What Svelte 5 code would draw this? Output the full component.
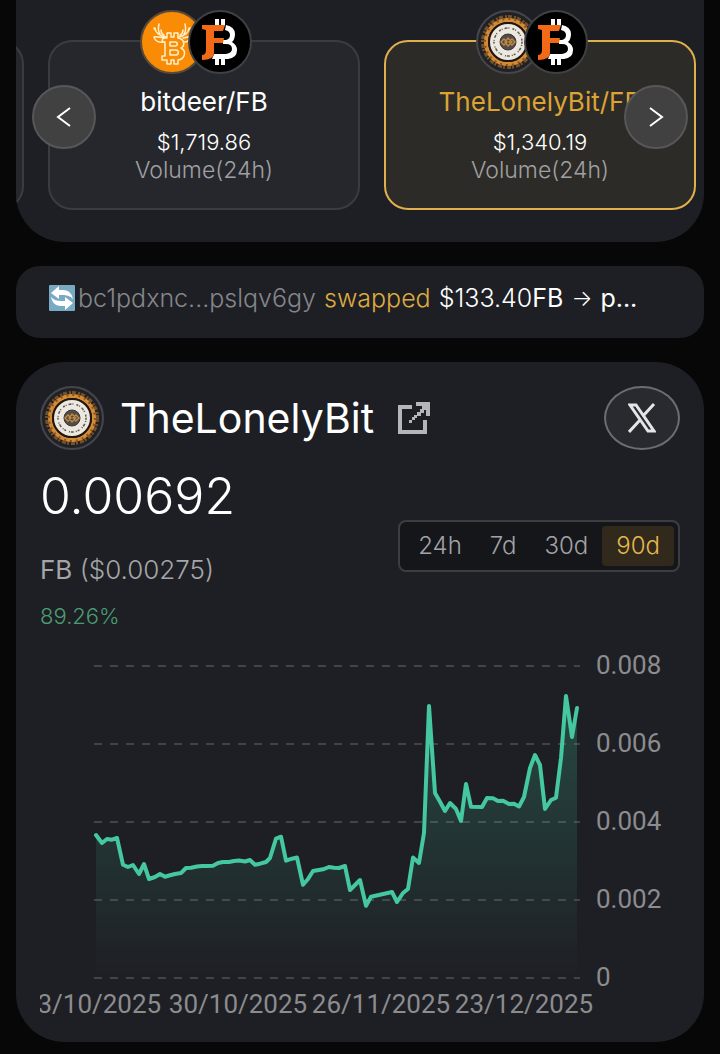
<script>
	let range = '90d';
	const ranges = ['24h', '7d', '30d', '90d'];

	const pairs = [
		{ name: 'bitdeer/FB', volume: '$1,719.86', icon: 'deer' },
		{ name: 'TheLonelyBit/FB', volume: '$1,340.19', icon: 'lonely' }
	];
	let selected = 'TheLonelyBit/FB';

	const yTicks = [
		{ label: '0.008', y: 26 },
		{ label: '0.006', y: 104 },
		{ label: '0.004', y: 182 },
		{ label: '0.002', y: 260 },
		{ label: '0', y: 338 }
	];

	const xTicks = [
		{ label: '03/10/2025', x: 52 },
		{ label: '30/10/2025', x: 198 },
		{ label: '26/11/2025', x: 341 },
		{ label: '23/12/2025', x: 484 }
	];

	const points = [
		[56, 195], [62, 203], [67, 199], [72, 199.7], [77, 198], [83, 224.7], [88, 227], [93, 225],
		[99, 234], [104, 224], [109, 239], [115, 237], [120, 234], [125, 236.7], [130, 235.3],
		[135, 234], [141, 233], [146, 228], [151, 227.7], [157, 226.5], [162, 226], [167, 226],
		[173, 225.7], [178, 223], [183, 222], [189, 222], [194, 221], [199, 220.5], [205, 221.5],
		[210, 220], [215, 224.7], [220, 223.7], [226, 222], [230, 218], [236, 198.7], [241, 196.7],
		[246, 220.7], [252, 218.7], [257, 217.5], [263, 244.7], [268, 239], [273, 231], [283, 229.3],
		[289, 227], [294, 227.7], [299, 228], [305, 226], [310, 250], [315, 245], [320, 240],
		[326, 265.7], [331, 256.7], [341, 254.5], [352, 252], [357, 262], [363, 253], [368, 249],
		[373, 217.5], [379, 223], [384, 193], [389, 66], [395, 153], [400, 161.7], [405, 171],
		[410, 163], [416, 169], [421, 181], [426, 144], [431, 166.7], [442, 167], [447, 158],
		[453, 158.3], [458, 161], [463, 160.7], [469, 164], [474, 163.7], [479, 166.5], [484, 157],
		[490, 128], [495, 115], [500, 125], [505, 169], [511, 160], [516, 157.7], [521, 118],
		[526, 56], [532, 97], [537, 68]
	];

	$: line = points.map((p) => p.join(',')).join(' ');
	$: area = `56,338 ${line} 537,338`;
</script>

<svelte:head>
	<title>TheLonelyBit/FB</title>
</svelte:head>

{#snippet lonelyCoin()}
	<svg class="coin" viewBox="0 0 64 64" aria-hidden="true">
		<circle cx="32" cy="32" r="31" fill="#202126" stroke="#44464b" stroke-width="2" />
		<circle cx="32" cy="32" r="25" fill="none" stroke="#765027" stroke-width="4" stroke-dasharray="4 2 2 1" />
		<circle cx="32" cy="32" r="22" fill="none" stroke="#d58a35" stroke-width="4" />
		<circle cx="32" cy="32" r="23" fill="none" stroke="#835620" stroke-width="2" stroke-dasharray="2 4" />
		<circle cx="32" cy="32" r="19" fill="#ece7df" stroke="#21170f" stroke-width="2" />
		<circle cx="32" cy="32" r="14" fill="none" stroke="#5d5851" stroke-width="1.5" stroke-dasharray="2 1 1 2 3 1 1 3" />
		<circle cx="32" cy="32" r="8" fill="#514c48" stroke="#393735" />
		<path d="M25 32l3-3 3 3-3 3zM29 32l3-4 4 4-4 4zM33 32l3-3 3 3-3 3z" fill="none" stroke="#c58a42" stroke-width="1.3" />
	</svg>
{/snippet}

{#snippet deerCoin()}
	<svg class="coin" viewBox="0 0 64 64" aria-hidden="true">
		<circle cx="32" cy="32" r="31" fill="#fa8c05" stroke="#5a4a39" stroke-width="2" />
		<g fill="none" stroke="#fff0c9" stroke-width="1.5" stroke-linejoin="round" stroke-linecap="round">
			<path d="M26 27c-7-1-11-5-11-9M16 21l-2-3M20 24c-2-3-2-6-1-10M24 25c-2-1-3-3-3-5" />
			<path d="M38 27c7-1 11-5 11-9M48 21l2-3M44 24c2-3 2-6 1-10M40 25c2-1 3-3 3-5" />
			<path d="M25 28c-4 0-8-2-11-1 1 4 5 6 10 5M43 28c3 0 5-2 8-1-1 4-4 5-7 5" />
			<path d="M23 28h4v-5h4v4h3v-4h4v5c7 1 7 8 3 10 6 3 4 11-3 12v4h-4v-4h-3v4h-4v-4h-5v-4h3V32h-3z" />
			<path d="M30 32h5c3 0 3 4 0 4h-5zM30 40h6c3 0 3 5 0 5h-6z" />
		</g>
	</svg>
{/snippet}

{#snippet fbCoin()}
	<svg class="coin" viewBox="0 0 64 64" aria-hidden="true">
		<circle cx="32" cy="32" r="31" fill="#000" stroke="#3f4044" stroke-width="2" />
		<path d="M27 9h4v7h-4zM33 9h4v7h-4zM27 48h4v7h-4zM33 48h4v7h-4z" fill="#fff" />
		<path d="M38 15q9 2 9 9 0 5-3 8 5 3 5 8 0 8-9 9H24l2-5h12q6-1 6-5 0-5-6-5h-3v-4h3q4-1 4-5 0-4-5-5z" fill="#fff" />
		<path d="M14 15h23l-2 6H26v7h10l-1 5h-9v10q0 7-12 7v-5q4 0 4-5V20l-4-1z" fill="#f26a16" />
	</svg>
{/snippet}

<main>
	<section class="panel pairs">
		<div class="track">
			<div class="pair"></div>
			{#each pairs as pair (pair.name)}
				<button class="pair" class:selected={selected === pair.name} on:click={() => (selected = pair.name)}>
					<span class="coins">
						{#if pair.icon === 'deer'}
							{@render deerCoin()}
						{:else}
							{@render lonelyCoin()}
						{/if}
						{@render fbCoin()}
					</span>
					<span class="pair-name">{pair.name}</span>
					<span class="pair-volume">{pair.volume}</span>
					<span class="pair-caption">Volume(24h)</span>
				</button>
			{/each}
		</div>
		<button class="nav prev" aria-label="Previous">
			<svg viewBox="0 0 24 24"><path d="M18 3L6 12l12 9" /></svg>
		</button>
		<button class="nav next" aria-label="Next">
			<svg viewBox="0 0 24 24"><path d="M6 3l12 9-12 9" /></svg>
		</button>
	</section>

	<section class="panel ticker">
		<svg class="swap" viewBox="0 0 28 28" aria-hidden="true">
			<rect x="1" y="1" width="26" height="26" rx="1" fill="#79aac4" />
			<path d="M3 9l8-7v4h4c6 0 9 4 10 9-3-3-6-4-10-4h-4v4z" fill="#fff" />
			<path d="M25 19l-8 7v-4h-4c-6 0-9-4-10-9 3 3 6 4 10 4h4v-4z" fill="#fff" />
		</svg>
		<span class="address">bc1pdxnc...pslqv6gy</span>
		<span class="action">swapped</span>
		<span>$133.40<b>FB</b></span>
		<span class="arrow">→</span>
		<b>p...</b>
	</section>

	<section class="panel token">
		<header>
			{@render lonelyCoin()}
			<h1>TheLonelyBit</h1>
			<a class="external" href="#explorer" aria-label="Open in explorer">
				<svg viewBox="0 0 32 32" fill="#b5b6b8">
					<path d="M0 3h14v4H4v21h21V18h4v14H0z" />
					<path d="M18 0h14v14h-4V8h-4V4h-6zM22 7h4v4h-4zM19 10h4v4h-4zM16 13h3v3h-3zM14 15h3v3h-3zM11 18h3v3h-3z" />
				</svg>
			</a>
			<a class="social" href="#x" aria-label="X">
				<svg viewBox="0 0 28 30" fill="none" stroke="#e5e5e7" stroke-width="3">
					<path d="M2 2h6l18 26h-6zM26 1L15 13M12 17L1 29" />
				</svg>
			</a>
		</header>

		<div class="summary">
			<div>
				<div class="price">0.00692</div>
				<div class="quote"><b>FB</b> ($0.00275)</div>
				<div class="change">89.26%</div>
			</div>
			<div class="ranges">
				{#each ranges as item (item)}
					<button class:active={range === item} on:click={() => (range = item)}>{item}</button>
				{/each}
			</div>
		</div>

		<svg class="chart" viewBox="0 0 640 378" role="img" aria-label="Price, last 90 days">
			<defs>
				<linearGradient id="fill" gradientUnits="userSpaceOnUse" x1="0" y1="56" x2="0" y2="338">
					<stop offset="0" stop-color="#41c9a0" stop-opacity="0.25" />
					<stop offset="1" stop-color="#41c9a0" stop-opacity="0" />
				</linearGradient>
			</defs>
			{#each yTicks as tick (tick.label)}
				<line x1="54" x2="540" y1={tick.y} y2={tick.y} />
				<text x="556" y={tick.y + 8}>{tick.label}</text>
			{/each}
			<polygon points={area} fill="url(#fill)" />
			<polyline points={line} />
			{#each xTicks as tick (tick.label)}
				<text x={tick.x} y="373" text-anchor="middle">{tick.label}</text>
			{/each}
		</svg>
	</section>
</main>

<style>
	:global(body) {
		background: #070707;
	}

	main {
		display: flex;
		flex-direction: column;
		gap: 24px;
		padding: 0 16px 12px;
		color: #fff;
		font-family: Inter, 'Noto Sans', sans-serif;
		font-size: 24px;
		font-weight: 300;
	}

	button {
		font: inherit;
		color: inherit;
		cursor: pointer;
	}

	b {
		font-weight: 400;
	}

	.panel {
		background: #1e1f24;
		border-radius: 48px;
	}

	.coin {
		display: block;
		width: 64px;
		height: 64px;
		flex: none;
	}

	.pairs {
		position: relative;
		overflow: hidden;
		padding: 40px 8px 32px;
		border-radius: 0 0 48px 48px;
	}

	.track {
		display: flex;
		justify-content: flex-end;
		gap: 24px;
	}

	.pair {
		position: relative;
		display: flex;
		flex: 0 0 312px;
		flex-direction: column;
		align-items: center;
		box-sizing: border-box;
		padding: 44px 0 24px;
		background: #26272d;
		border: 2px solid #3b3c41;
		border-radius: 24px;
	}

	.pair.selected {
		background: #2d2b27;
		border-color: #e0b04c;
	}

	.coins {
		position: absolute;
		top: -32px;
		display: flex;
	}

	.coins .coin {
		margin-left: -16px;
	}

	.pair-name {
		margin-bottom: 10px;
		font-size: 26px;
		font-weight: 400;
		line-height: 32px;
	}

	.selected .pair-name {
		color: #dda335;
	}

	.pair-volume,
	.pair-caption {
		font-size: 22px;
		line-height: 28px;
	}

	.pair-caption {
		color: #a0a0a2;
		font-size: 23px;
	}

	.nav {
		position: absolute;
		top: 85px;
		display: grid;
		place-items: center;
		width: 64px;
		height: 64px;
		padding: 0;
		background: #414142;
		border: 2px solid #57575a;
		border-radius: 50%;
	}

	.nav svg {
		width: 24px;
		height: 24px;
		fill: none;
		stroke: #fff;
		stroke-width: 2;
	}

	.prev {
		left: 16px;
	}

	.next {
		right: 16px;
	}

	.ticker {
		display: flex;
		align-items: center;
		gap: 8px;
		padding: 16px 32px 24px;
		border-radius: 24px;
		font-size: 25px;
		line-height: 32px;
		white-space: nowrap;
	}

	.swap {
		width: 28px;
		height: 28px;
		margin-right: -6px;
		flex: none;
	}

	.address {
		color: #85868a;
	}

	.action {
		color: #dfab3e;
	}

	.arrow {
		font-size: 22px;
	}

	.token {
		padding: 24px;
	}

	header {
		display: flex;
		align-items: center;
	}

	h1 {
		margin: 0 24px 0 16px;
		font-size: 41px;
		font-weight: 400;
		line-height: 48px;
	}

	.external svg {
		display: block;
		width: 32px;
		height: 32px;
	}

	.social {
		display: grid;
		place-items: center;
		box-sizing: border-box;
		width: 76px;
		height: 64px;
		margin-left: auto;
		background: #292a2f;
		border: 2px solid #6c6d71;
		border-radius: 50%;
	}

	.social svg {
		width: 28px;
		height: 30px;
	}

	.summary {
		display: flex;
		align-items: center;
		justify-content: space-between;
		margin: 14px 0 12px;
	}

	.price {
		margin-bottom: 26px;
		font-size: 50px;
		line-height: 64px;
	}

	.quote {
		margin-bottom: 18px;
		color: #a5a5a8;
		font-size: 26px;
		line-height: 32px;
	}

	.change {
		color: #4b9c72;
		font-size: 22px;
		line-height: 24px;
	}

	.ranges {
		display: flex;
		padding: 4px;
		background: #15161a;
		border: 2px solid #3c3d41;
		border-radius: 8px;
	}

	.ranges button {
		padding: 0 14px;
		background: none;
		border: 0;
		border-radius: 4px;
		color: #a3a3a6;
		line-height: 40px;
	}

	.ranges .active {
		background: #32291d;
		color: #e5b94e;
	}

	.chart {
		display: block;
		width: 100%;
		overflow: hidden;
	}

	.chart line {
		stroke: #424347;
		stroke-width: 2;
		stroke-dasharray: 8 8;
	}

	.chart polyline {
		fill: none;
		stroke: #45c7a0;
		stroke-width: 4;
		stroke-linejoin: round;
		stroke-linecap: round;
	}

	.chart text {
		fill: #8c8c8f;
		font-family: Roboto, sans-serif;
		font-size: 26px;
		font-weight: 400;
	}
</style>
